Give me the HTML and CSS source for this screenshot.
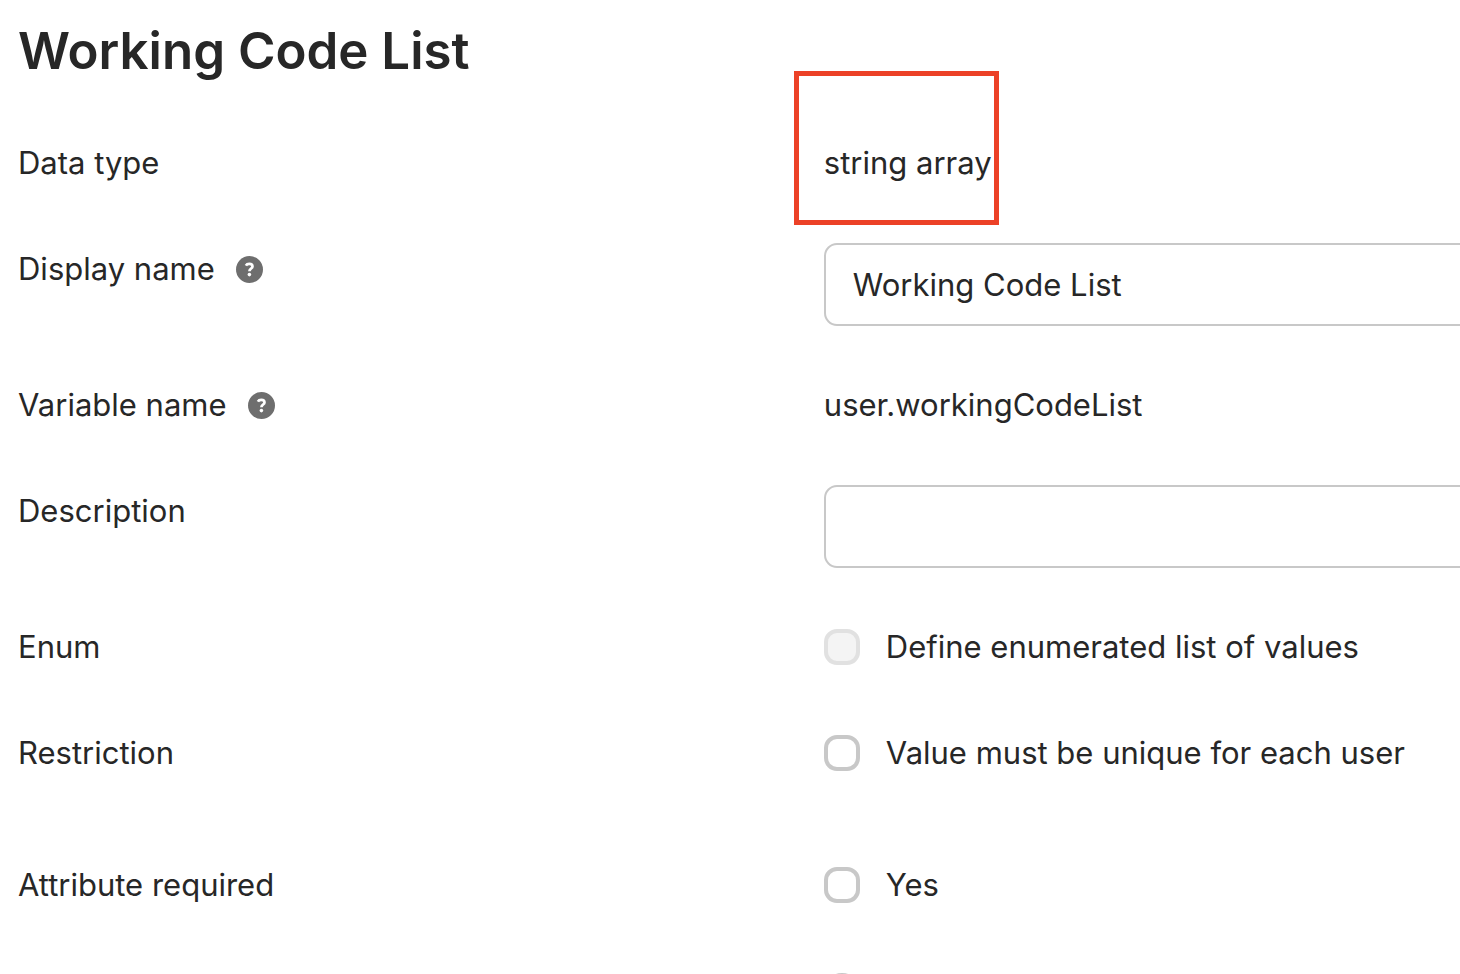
FILE: index.html
```html
<!DOCTYPE html>
<html lang="en">
<head>
  <meta charset="utf-8">
  <title>Working Code List</title>
  <link rel="stylesheet" href="styles.css">
</head>
<body>
  <form class="attribute-form">
    <h1>Working Code List</h1>

    <div class="row">
      <div class="label">Data type</div>
      <div class="value">string array
        <span class="highlight"></span>
      </div>
    </div>

    <div class="row">
      <div class="label">
        <label for="displayName">Display name</label>
        <svg class="help-icon" viewBox="0 0 27 27" aria-hidden="true">
          <circle cx="13.500" cy="13.500" r="13.500" fill="#6e6e6e"/>
          <path d="M9.900 9.600C10.500 8.400 11.700 7.900 13.300 7.900c2 0 3.200.9 3.200 2.500 0 2.200-3.100 2.100-3.100 4.900" fill="none" stroke="#fff" stroke-width="2.700"/>
          <circle cx="13.400" cy="18.600" r="1.800" fill="#fff"/>
        </svg>
      </div>
      <input type="text" id="displayName" class="text-input" value="Working Code List">
    </div>

    <div class="row">
      <div class="label">
        <span>Variable name</span>
        <svg class="help-icon" viewBox="0 0 27 27" aria-hidden="true">
          <circle cx="13.500" cy="13.500" r="13.500" fill="#6e6e6e"/>
          <path d="M9.900 9.600C10.500 8.400 11.700 7.900 13.300 7.900c2 0 3.200.9 3.200 2.500 0 2.200-3.100 2.100-3.100 4.900" fill="none" stroke="#fff" stroke-width="2.700"/>
          <circle cx="13.400" cy="18.600" r="1.800" fill="#fff"/>
        </svg>
      </div>
      <div class="value">user.workingCodeList</div>
    </div>

    <div class="row">
      <div class="label"><label for="description">Description</label></div>
      <input type="text" id="description" class="text-input">
    </div>

    <div class="row">
      <div class="label">Enum</div>
      <div class="value check">
        <input type="checkbox" id="enum" disabled>
        <label for="enum">Define enumerated list of values</label>
      </div>
    </div>

    <div class="row restriction">
      <div class="label">Restriction</div>
      <div class="value check">
        <input type="checkbox" id="unique">
        <label for="unique">Value must be unique for each user</label>
      </div>
    </div>

    <div class="row">
      <div class="label">Attribute required</div>
      <div class="value check">
        <input type="checkbox" id="required">
        <label for="required">Yes</label>
      </div>
    </div>

    <div class="row">
      <div class="label"></div>
      <div class="value check">
        <input type="radio" name="scope" aria-label="Scope">
      </div>
    </div>
  </form>
</body>
</html>
```

FILE: styles.css
```css
* {
  box-sizing: border-box;
}

body {
  margin: 0;
  background: #fff;
  color: #272727;
  font-family: Inter, sans-serif;
  font-size: 31px;
  line-height: 52px;
  overflow: hidden;
}

.attribute-form {
  padding: 17px 0 0 18px;
}

h1 {
  margin: 0 0 52px;
  font-size: 51px;
  font-weight: 600;
  line-height: 68px;
}

.row {
  display: grid;
  grid-template-columns: 19fr 15fr;
  align-items: start;
  min-height: 54px;
  margin-bottom: 52px;
}

.row.restriction {
  margin-bottom: 78px;
}

.label {
  display: flex;
  align-items: center;
  gap: 21px;
}

.value {
  position: relative;
}

.help-icon {
  width: 27px;
  height: 27px;
}

/* Field runs past the right edge of the window */
.text-input {
  width: calc(100% + 16px);
  height: 83px;
  margin-bottom: 1px;
  padding: 0 27px;
  border: 2px solid #c8c8c8;
  border-radius: 13px;
  background: #fff;
  color: inherit;
  font: inherit;
}

.check {
  display: flex;
  align-items: center;
  gap: 26px;
  min-height: 52px;
}

.check input {
  appearance: none;
  width: 36px;
  height: 36px;
  margin: 0;
  border: 4px solid #c8c8c8;
  border-radius: 13px;
  background: #fff;
}

.check input[type="radio"] {
  border-radius: 50%;
}

.check input:disabled {
  border-color: #e1e1e1;
  background: #f4f4f4;
}

/* Red frame drawn over the data type */
.highlight {
  position: absolute;
  top: -66px;
  left: -30px;
  width: 205px;
  height: 154px;
  border: 5px solid #ec4127;
}
```
